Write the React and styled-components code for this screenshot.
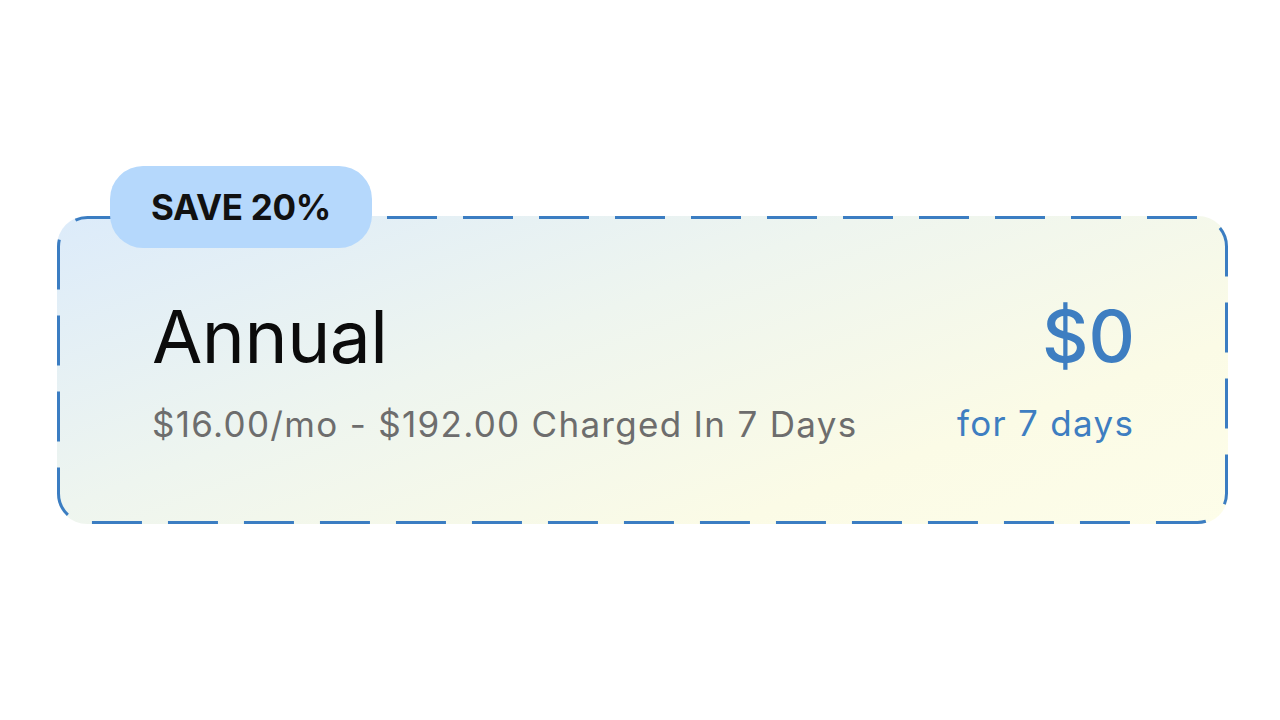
import React from 'react'
import styled, {createGlobalStyle} from 'styled-components'

const Global = createGlobalStyle`
  html, body {
    margin: 0;
    background: #ffffff;
    font-family: Inter, "Noto Sans", sans-serif;
  }
`

const Page = styled.div`
  width: 1280px;
  height: 720px;
  box-sizing: border-box;
  padding: 216px 0 0 57px;
`

const Card = styled.div`
  position: relative;
  width: ${p => p.w}px;
  height: ${p => p.h}px;
  box-sizing: border-box;
  border-radius: 30px;
  background: linear-gradient(160deg, #dcebfa 0%, #eef5ef 40%, #fbfbe6 75%, #fdfde9 100%);
  padding: 84px 95px 0 95px;
  display: flex;
  justify-content: space-between;
  align-items: flex-start;
`

const Outline = styled.svg`
  position: absolute;
  inset: 0;
  pointer-events: none;
  overflow: visible;
`

const Badge = styled.div`
  position: absolute;
  top: -50px;
  left: 53px;
  width: 262px;
  height: 82px;
  border-radius: 33px;
  background: #b5d8fc;
  display: flex;
  align-items: center;
  justify-content: center;
  font-size: 35px;
  font-weight: 700;
  color: #111111;
  letter-spacing: -0.3px;
  z-index: 2;
`

const Info = styled.div`
  display: flex;
  flex-direction: column;
`

const Title = styled.div`
  font-size: 73px;
  line-height: 1;
  font-weight: 400;
  color: #0b0b0b;
  letter-spacing: -0.5px;
`

const Sub = styled.div`
  margin-top: 34px;
  font-size: 35px;
  line-height: 1;
  color: ${p => p.color || '#6d6d6d'};
  letter-spacing: 1.3px;
  margin-right: -1.3px;
`

const Price = styled.div`
  display: flex;
  flex-direction: column;
  align-items: flex-end;
`

const Amount = styled.div`
  font-size: 72px;
  line-height: 1;
  font-weight: 500;
  color: #3e7ec1;
  margin-right: -2px;
`

export default function App() {
  const w = 1171
  const h = 308
  return (
    <Page>
      <Global />
      <Card w={w} h={h}>
        <Outline width={w} height={h}>
          <rect
            x="1.5" y="1.5"
            width={w - 3} height={h - 3}
            rx="29" ry="29"
            fill="none"
            stroke="#3b7dc2"
            strokeWidth="3"
            strokeDasharray="50 26"
            strokeDashoffset="4.5"
          />
        </Outline>
        <Badge>SAVE 20%</Badge>
        <Info>
          <Title>Annual</Title>
          <Sub>$16.00/mo - $192.00 Charged In 7 Days</Sub>
        </Info>
        <Price>
          <Amount>$0</Amount>
          <Sub color="#3e7ec1">for 7 days</Sub>
        </Price>
      </Card>
    </Page>
  )
}
